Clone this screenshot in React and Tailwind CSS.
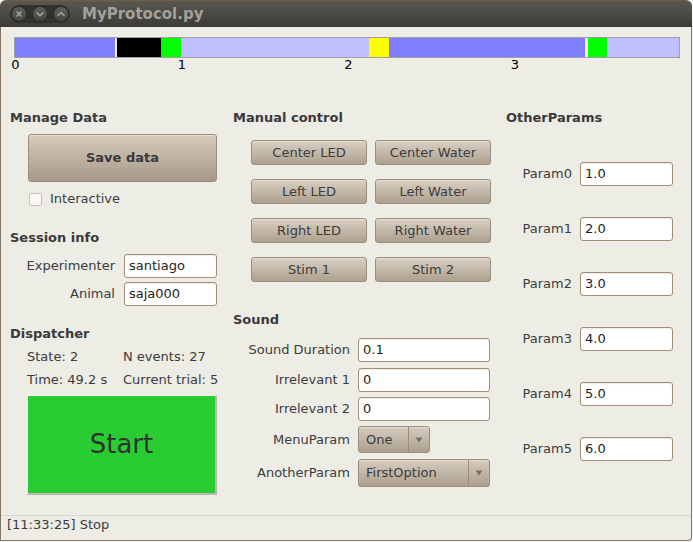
import React from "react";

const segs = [
  { w: 100, c: "bg-[#7f7fff]" },
  { w: 2, c: "bg-[#f2f2f2]" },
  { w: 44, c: "bg-black" },
  { w: 20, c: "bg-[#00ff00]" },
  { w: 188, c: "bg-[#bfbfff]" },
  { w: 20, c: "bg-[#ffff00]" },
  { w: 196, c: "bg-[#7f7fff]" },
  { w: 3, c: "bg-[#f2f2f2]" },
  { w: 19, c: "bg-[#00ff00]" },
  { w: 72, c: "bg-[#bfbfff]" },
];

function TitleBtn({ kind }) {
  return (
    <div className="w-[16px] h-[16px] rounded-full bg-linear-to-b from-[#605f5a] to-[#46453f] border border-[#2c2b28] flex items-center justify-center">
      <svg width="10" height="10" viewBox="-5 -5 10 10">
        {kind === "x" && (
          <path d="M-2.5 -2.5 L2.5 2.5 M2.5 -2.5 L-2.5 2.5" stroke="#a9a8a1" strokeWidth="1.4" fill="none" />
        )}
        {kind === "down" && (
          <path d="M-3.5 -1.5 L0 1.8 L3.5 -1.5" stroke="#a9a8a1" strokeWidth="1.4" fill="none" />
        )}
        {kind === "up" && (
          <path d="M-3.5 1.8 L0 -1.5 L3.5 1.8" stroke="#a9a8a1" strokeWidth="1.4" fill="none" />
        )}
      </svg>
    </div>
  );
}

function Heading({ children, className = "" }) {
  return <div className={"font-bold leading-[16px] text-[#3a3a3a] " + className}>{children}</div>;
}

function Input({ value, w }) {
  return (
    <div className={"h-[24px] bg-white border border-[#a08f76] rounded-[3px] pl-[4px] flex items-center text-[#1e1e1e] shadow-[inset_0_1px_1px_rgba(0,0,0,0.08)] " + w}>
      {value}
    </div>
  );
}

function Btn({ children }) {
  return (
    <div className="h-[25px] rounded-[3px] border border-[#9b8e7b] bg-linear-to-b from-[#d9d0c3] to-[#ada190] flex items-center justify-center text-[#3c3c3c] shadow-[inset_0_1px_0_rgba(255,255,255,0.35)]">
      {children}
    </div>
  );
}

function Combo({ value, w, h }) {
  return (
    <div className={"flex rounded-[3px] border border-[#9b8e7b] bg-linear-to-b from-[#d6cdbf] to-[#ab9f8e] text-[#3c3c3c] shadow-[inset_0_1px_0_rgba(255,255,255,0.35)] " + w + " " + h}>
      <div className="flex-1 flex items-center pl-[7px]">{value}</div>
      <div className="w-[21px] border-l border-[#9b8e7b] flex items-center justify-center">
        <svg width="8" height="6" viewBox="0 0 8 6">
          <path d="M0.5 0.5 L7.5 0.5 L4 5.5 Z" fill="#7a7061" />
        </svg>
      </div>
    </div>
  );
}

export default function App() {
  return (
    <div className="w-[693px] h-[542px] bg-[#f6f5f1] overflow-hidden text-[13px]" style={{ fontFamily: '"DejaVu Sans", sans-serif' }}>
      <div className="w-[692px] h-[541px] flex flex-col">
        {/* title bar */}
        <div className="h-[27px] shrink-0 rounded-t-[6px] bg-linear-to-b from-[#5a5852] to-[#3b3a36] border-t border-[#6e5f4c] flex items-center">
          <div className="ml-[10px] w-[60px] h-[18px] rounded-full bg-[#33322e] flex items-center justify-between px-[1px]">
            <TitleBtn kind="x" />
            <TitleBtn kind="down" />
            <TitleBtn kind="up" />
          </div>
          <div className="ml-[12px] font-bold text-[15px] text-[#a2a19a] leading-[18px]">MyProtocol.py</div>
        </div>

        {/* body */}
        <div className="flex-1 flex flex-col bg-[#edece5] border-x border-b border-[#857461] rounded-br-[4px]">
          <div className="mt-[10px] ml-[13px] w-[666px] h-[21px] border border-[#a0a0a0] flex">
            {segs.map((s, i) => (
              <div key={i} className={"h-full " + s.c} style={{ width: s.w }} />
            ))}
          </div>
          <div className="relative ml-[13px] h-[14px] text-black leading-[14px]">
            {[0, 1, 2, 3].map((n) => (
              <span key={n} className="absolute top-0 -translate-x-1/2" style={{ left: 1.5 + n * 166.5 }}>
                {n}
              </span>
            ))}
          </div>

          <div className="mt-[38px] pl-[9px] flex gap-[16px] text-[#3c3c3c]">
            {/* column 1 */}
            <div className="w-[207px] flex flex-col">
              <Heading>Manage Data</Heading>
              <div className="mt-[8px] ml-[18px] w-[189px] h-[48px] rounded-[3px] border border-[#9a8d7a] bg-linear-to-b from-[#d5cbbd] to-[#a7998a] flex items-center justify-center font-bold text-[#3a3a3a] shadow-[inset_0_1px_0_rgba(255,255,255,0.35)]">
                Save data
              </div>
              <div className="mt-[9px] ml-[19px] h-[16px] flex items-center leading-[16px]">
                <div className="w-[13px] h-[13px] rounded-[2px] border border-[#c9c1b4] bg-[#f8f7f4]" />
                <span className="ml-[8px]">Interactive</span>
              </div>
              <Heading className="mt-[23px]">Session info</Heading>
              <div className="mt-[8px] flex items-center gap-[9px]">
                <div className="w-[105px] text-right">Experimenter</div>
                <Input value="santiago" w="w-[93px]" />
              </div>
              <div className="mt-[4px] flex items-center gap-[9px]">
                <div className="w-[105px] text-right">Animal</div>
                <Input value="saja000" w="w-[93px]" />
              </div>
              <Heading className="mt-[20px]">Dispatcher</Heading>
              <div className="mt-[7px] pl-[17px] flex leading-[16px] whitespace-nowrap">
                <div className="w-[96px] shrink-0">State: 2</div>
                <div>N events: 27</div>
              </div>
              <div className="mt-[7px] pl-[17px] flex leading-[16px] whitespace-nowrap">
                <div className="w-[96px] shrink-0">Time: 49.2 s</div>
                <div>Current trial: 5</div>
              </div>
              <div className="mt-[7px] ml-[17px] w-[190px] h-[100px] bg-[#29cd33] border-t border-l border-[#f4f4f0] border-r-2 border-b-2 border-r-[#b9b8b2] border-b-[#b9b8b2] flex items-center justify-center text-[26px] text-[#2e332e]">
                Start
              </div>
            </div>

            {/* column 2 */}
            <div className="w-[257px] flex flex-col">
              <Heading>Manual control</Heading>
              <div className="mt-[14px] ml-[18px] grid grid-cols-[116px_116px] gap-x-[8px] gap-y-[14px]">
                <Btn>Center LED</Btn>
                <Btn>Center Water</Btn>
                <Btn>Left LED</Btn>
                <Btn>Left Water</Btn>
                <Btn>Right LED</Btn>
                <Btn>Right Water</Btn>
                <Btn>Stim 1</Btn>
                <Btn>Stim 2</Btn>
              </div>
              <Heading className="mt-[30px]">Sound</Heading>
              <div className="mt-[10px] flex items-center gap-[8px]">
                <div className="w-[117px] text-right">Sound Duration</div>
                <Input value="0.1" w="w-[132px]" />
              </div>
              <div className="mt-[6px] flex items-center gap-[8px]">
                <div className="w-[117px] text-right">Irrelevant 1</div>
                <Input value="0" w="w-[132px]" />
              </div>
              <div className="mt-[5px] flex items-center gap-[8px]">
                <div className="w-[117px] text-right">Irrelevant 2</div>
                <Input value="0" w="w-[132px]" />
              </div>
              <div className="mt-[5px] flex items-center gap-[8px]">
                <div className="w-[117px] text-right">MenuParam</div>
                <Combo value="One" w="w-[72px]" h="h-[27px]" />
              </div>
              <div className="mt-[6px] flex items-center gap-[8px]">
                <div className="w-[117px] text-right">AnotherParam</div>
                <Combo value="FirstOption" w="w-[132px]" h="h-[28px]" />
              </div>
            </div>

            {/* column 3 */}
            <div className="w-[167px] flex flex-col">
              <Heading>OtherParams</Heading>
              {["1.0", "2.0", "3.0", "4.0", "5.0", "6.0"].map((v, i) => (
                <div key={i} className={"flex items-center gap-[8px] " + (i === 0 ? "mt-[36px]" : "mt-[31px]")}>
                  <div className="w-[66px] text-right">{"Param" + i}</div>
                  <Input value={v} w="w-[93px]" />
                </div>
              ))}
            </div>
          </div>

          <div className="flex-1" />
          <div className="h-[25px] shrink-0 border-t border-[#d9d7cf] pl-[6px] pt-[1px] leading-[16px] text-[#3c3c3c]">
            [11:33:25] Stop
          </div>
        </div>
      </div>
    </div>
  );
}
